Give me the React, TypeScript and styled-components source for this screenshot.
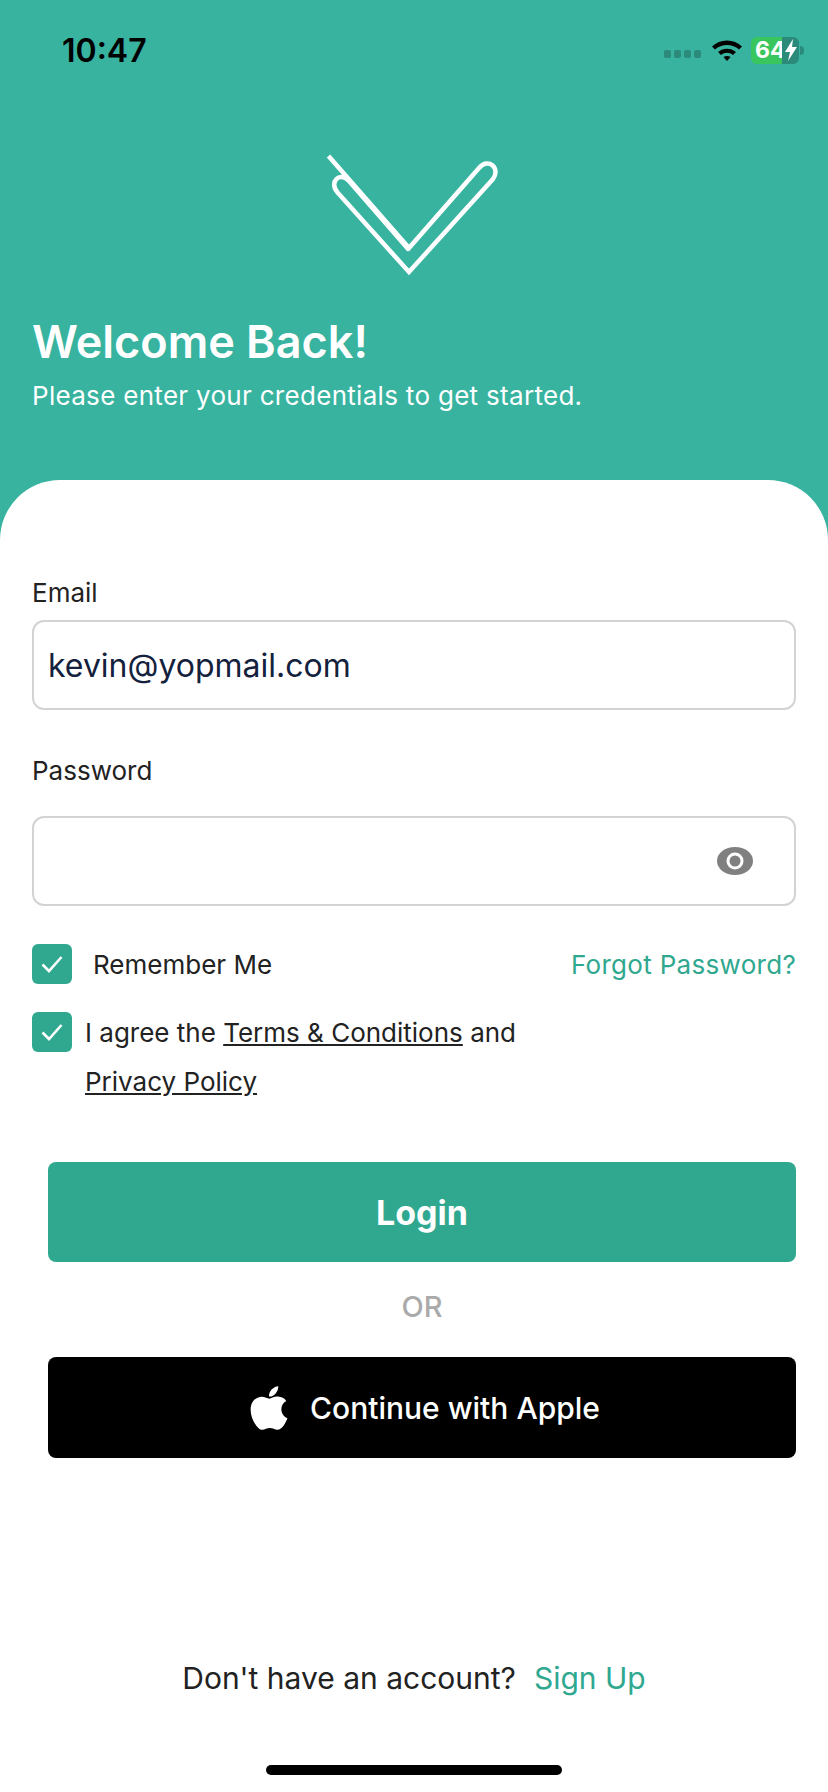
import styled, { createGlobalStyle } from 'styled-components'
import { FaApple } from 'react-icons/fa'

const GlobalStyle = createGlobalStyle`
  html, body {
    margin: 0;
    padding: 0;
    background: #fff;
    font-family: Inter, "Liberation Sans", sans-serif;
  }
  * { box-sizing: border-box; }
`

function CheckIcon() {
  return (
    <svg width="24" height="20" viewBox="0 0 24 20" fill="none">
      <path d="M2.5 10.5 L9 17 L21.5 3" stroke="#fff" strokeWidth="2.6" />
    </svg>
  )
}

export default function App() {
  return (
    <>
      <GlobalStyle />
      <Screen>
        <Header>
          <StatusBar>
            <Time>10:47</Time>
            <StatusIcons>
              <Signal>
                <SignalDot /><SignalDot /><SignalDot /><SignalDot />
              </Signal>
              <svg width="32" height="24" viewBox="0 0 32 24">
                <path d="M1 8.5 C9 0.5 23 0.5 31 8.5 L28 11.5 C21.5 5.5 10.5 5.5 4 11.5 Z" fill="#000" />
                <path d="M7 14 C12 9.5 20 9.5 25 14 L22 17 C18.5 14 13.5 14 10 17 Z" fill="#000" />
                <path d="M12.5 19 C14.5 17.5 17.5 17.5 19.5 19 L16 23 Z" fill="#000" />
              </svg>
              <Battery>
                <BatteryFill>64</BatteryFill>
                <BatteryRest>
                  <svg width="14" height="24" viewBox="0 0 14 24">
                    <path d="M9 1 L1 14 H6 L4 23 L13 9 H8 Z" fill="#fff" />
                  </svg>
                </BatteryRest>
                <BatteryTip />
              </Battery>
            </StatusIcons>
          </StatusBar>
          <LogoRow>
            <svg width="176" height="140" viewBox="0 0 176 140" fill="none">
              <path
                d="M5 3 V10 L85 103 L157 20 C165 10 177 20 168 31 L85 125 L11 40 C2 29 14 18 23 29 L85 125"
                stroke="none"
              />
              <path
                d="M4.5 6 L85 98 L155 18 C164 7 177 18 169 29 L85 122 L14 43 C4 32 16 21 25 31 L85 100"
                stroke="#fff"
                strokeWidth="4.5"
              />
              <path d="M14 43 L85 144 L172 44" stroke="none" />
              <path
                d="M14 45 L85 124"
                stroke="#fff"
                strokeWidth="0"
              />
              <path d="M7 38 L85 136 L172 48" stroke="none" />
            </svg>
          </LogoRow>
          <Title>Welcome Back!</Title>
          <Subtitle>Please enter your credentials to get started.</Subtitle>
        </Header>
        <Sheet>
          <FieldLabel>Email</FieldLabel>
          <InputBox>
            <InputValue>kevin@yopmail.com</InputValue>
          </InputBox>
          <FieldLabel $gap={44}>Password</FieldLabel>
          <InputBox $top={28}>
            <EyeButton>
              <svg width="36" height="28" viewBox="0 0 36 28">
                <ellipse cx="18" cy="14" rx="18" ry="14" fill="#808080" />
                <circle cx="18" cy="14" r="8.5" fill="#fff" />
                <circle cx="18" cy="14" r="5.5" fill="#808080" />
              </svg>
            </EyeButton>
          </InputBox>
          <RememberRow>
            <CheckGroup>
              <CheckBox><CheckIcon /></CheckBox>
              <RememberText>Remember Me</RememberText>
            </CheckGroup>
            <GreenLink>Forgot Password?</GreenLink>
          </RememberRow>
          <AgreeRow>
            <CheckBox><CheckIcon /></CheckBox>
            <AgreeText>
              I agree the <Underlined>Terms &amp; Conditions</Underlined> and
              <br />
              <Underlined>Privacy Policy</Underlined>
            </AgreeText>
          </AgreeRow>
          <Actions>
            <LoginButton>Login</LoginButton>
            <OrText>OR</OrText>
            <AppleButton>
              <FaApple size={50} />
              Continue with Apple
            </AppleButton>
          </Actions>
          <Footer>
            Don't have an account?<SignUp>Sign Up</SignUp>
          </Footer>
          <HomeIndicator />
        </Sheet>
      </Screen>
    </>
  )
}

const Screen = styled.div`
  width: 828px;
  height: 1792px;
  background: #37b3a0;
  overflow: hidden;
  display: flex;
  flex-direction: column;
`

const Header = styled.header`
  height: 480px;
  padding: 0 32px;
  color: #fff;
`

const StatusBar = styled.div`
  display: flex;
  justify-content: space-between;
  align-items: center;
  height: 50px;
  margin-top: 25px;
  padding: 0 0 0 30px;
`

const Time = styled.div`
  font-size: 32px;
  font-weight: 600;
  color: #000;
`

const StatusIcons = styled.div`
  display: flex;
  align-items: center;
  gap: 8px;
  margin-right: -3px;
`

const Signal = styled.div`
  display: flex;
  gap: 3px;
  margin-top: 8px;
  margin-right: 2px;
`

const SignalDot = styled.span`
  width: 7px;
  height: 8px;
  border-radius: 2px;
  background: #2c8a7b;
`

const Battery = styled.div`
  position: relative;
  display: flex;
  width: 48px;
  height: 27px;
  border-radius: 6px;
  overflow: visible;
`

const BatteryFill = styled.div`
  width: 31px;
  background: #39c65f;
  border-radius: 6px 0 0 6px;
  color: #fff;
  font-size: 23px;
  font-weight: 700;
  line-height: 27px;
  padding-left: 4px;
  white-space: nowrap;
`

const BatteryRest = styled.div`
  width: 17px;
  background: #2c8a7b;
  border-radius: 0 6px 6px 0;
  display: flex;
  align-items: center;
  justify-content: center;
`

const BatteryTip = styled.span`
  position: absolute;
  right: -5px;
  top: 9px;
  width: 4px;
  height: 9px;
  border-radius: 0 4px 4px 0;
  background: #2c8a7b;
`

const LogoRow = styled.div`
  display: flex;
  justify-content: center;
  height: 140px;
  margin-top: 75px;
  padding-right: 4px;
`

const Title = styled.h1`
  margin: 24px 0 0;
  font-size: 45px;
  font-weight: 600;
  line-height: 56px;
`

const Subtitle = styled.p`
  margin: 8px 0 0;
  font-size: 26px;
  line-height: 36px;
  letter-spacing: 0.3px;
`

const Sheet = styled.main`
  position: relative;
  flex: 1;
  background: #fff;
  border-radius: 60px 60px 0 0;
  padding: 96px 32px 0;
`

const FieldLabel = styled.div<{ $gap?: number }>`
  font-size: 26px;
  line-height: 34px;
  color: #222;
  margin-top: ${p => p.$gap ?? 0}px;
`

const InputBox = styled.div<{ $top?: number }>`
  display: flex;
  align-items: center;
  justify-content: flex-end;
  height: 90px;
  margin-top: ${p => p.$top ?? 10}px;
  border: 2px solid #d3d3d3;
  border-radius: 12px;
  padding: 0 14px;
`

const InputValue = styled.div`
  flex: 1;
  font-size: 32px;
  color: #14213d;
`

const EyeButton = styled.div`
  display: flex;
  margin-right: 27px;
`

const RememberRow = styled.div`
  display: flex;
  align-items: center;
  justify-content: space-between;
  margin-top: 38px;
`

const CheckGroup = styled.div`
  display: flex;
  align-items: center;
`

const CheckBox = styled.div`
  display: flex;
  align-items: center;
  justify-content: center;
  flex: none;
  width: 40px;
  height: 40px;
  border-radius: 6px;
  background: #2fa88f;
`

const RememberText = styled.span`
  margin-left: 21px;
  font-size: 26px;
  color: #222;
`

const GreenLink = styled.span`
  font-size: 26px;
  letter-spacing: 0.3px;
  color: #2fa88f;
`

const AgreeRow = styled.div`
  display: flex;
  margin-top: 28px;
`

const AgreeText = styled.div`
  margin-left: 13px;
  font-size: 26px;
  line-height: 49px;
  color: #222;
  margin-top: -4px;
`

const Underlined = styled.span`
  text-decoration: underline;
`

const Actions = styled.div`
  display: flex;
  flex-direction: column;
  align-items: center;
  margin: 56px 0 0 16px;
`

const LoginButton = styled.div`
  display: flex;
  align-items: center;
  justify-content: center;
  width: 748px;
  height: 100px;
  border-radius: 8px;
  background: #2fa88f;
  color: #fff;
  font-size: 34px;
  font-weight: 700;
`

const OrText = styled.div`
  height: 95px;
  line-height: 90px;
  font-size: 29px;
  font-weight: 500;
  color: #aaa;
`

const AppleButton = styled.div`
  display: flex;
  align-items: center;
  justify-content: center;
  gap: 16px;
  width: 748px;
  height: 101px;
  border-radius: 8px;
  background: #000;
  color: #fff;
  font-size: 30px;
  font-weight: 500;
`

const Footer = styled.div`
  display: flex;
  justify-content: center;
  align-items: center;
  gap: 18px;
  margin-top: 202px;
  font-size: 30px;
  color: #222;
`

const SignUp = styled.span`
  color: #2fa88f;
`

const HomeIndicator = styled.div`
  position: absolute;
  left: 266px;
  bottom: 17px;
  width: 296px;
  height: 10px;
  border-radius: 5px;
  background: #000;
`
